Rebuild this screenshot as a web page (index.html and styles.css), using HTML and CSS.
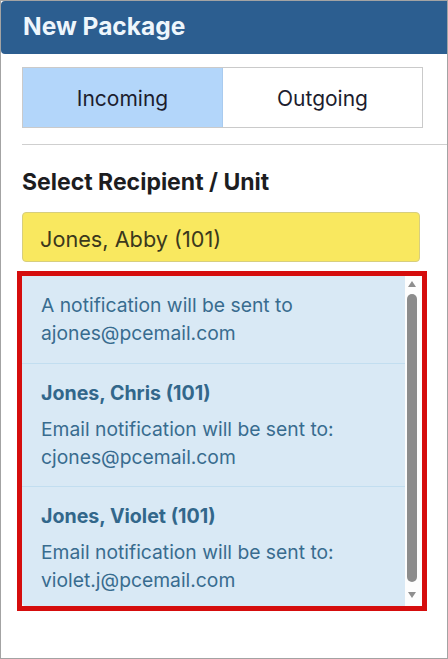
FILE: index.html
```html
<!DOCTYPE html>
<html lang="en">
<head>
<meta charset="utf-8">
<title>New Package</title>
<link rel="stylesheet" href="styles.css">
</head>
<body>
<div class="frame">
  <header class="header">New Package</header>
  <div class="content">
    <div class="toggle">
      <button class="seg seg-active" type="button">Incoming</button>
      <button class="seg" type="button">Outgoing</button>
    </div>
    <hr class="rule">
    <h2 class="heading">Select Recipient / Unit</h2>
    <div class="field">Jones, Abby (101)</div>
    <div class="listbox">
      <div class="options">
        <div class="option option-cut">
          <div class="email">A notification will be sent to<br>ajones@pcemail.com</div>
        </div>
        <div class="option">
          <div class="name">Jones, Chris (101)</div>
          <div class="email">Email notification will be sent to:<br>cjones@pcemail.com</div>
        </div>
        <div class="option">
          <div class="name">Jones, Violet (101)</div>
          <div class="email">Email notification will be sent to:<br>violet.j@pcemail.com</div>
        </div>
      </div>
      <div class="scrollbar">
        <span class="arrow arrow-up"></span>
        <span class="thumb"></span>
        <span class="arrow arrow-down"></span>
      </div>
    </div>
  </div>
</div>
</body>
</html>
```
FILE: styles.css
```css
* { box-sizing: border-box; }
html, body { margin: 0; padding: 0; background: #fff; }
body { font-family: Inter, "Noto Sans", sans-serif; }

.frame {
  width: 448px;
  height: 659px;
  border: 1px solid #a3a3a3;
  overflow: hidden;
  background: #fff;
}

.header {
  height: 53px;
  background: #2c5e90;
  color: #eef6fc;
  font-size: 24.5px;
  font-weight: 700;
  line-height: 50px;
  padding-left: 22px;
  border-radius: 4px 0 0 4px;
}

.content {
  padding: 13px 0 0 21px;
}

.toggle {
  display: flex;
  width: 401px;
  height: 61px;
  border: 1px solid #cacaca;
}
.seg {
  flex: 1;
  border: 0;
  margin: 0;
  padding: 2px 0 0;
  background: #fff;
  font-family: inherit;
  font-size: 21px;
  font-weight: 400;
  color: #1c1d2e;
}
.seg-active {
  background: #b3d6fa;
  border-right: 1px solid #a9cbef;
}

.rule {
  margin: 16px 0 0;
  border: 0;
  border-top: 1px solid #cfcfcf;
  height: 0;
}

.heading {
  margin: 23px 0 0;
  font-size: 23px;
  font-weight: 700;
  line-height: 28px;
  color: #1d1d1f;
}

.field {
  margin-top: 16px;
  width: 398px;
  height: 50px;
  padding: 4px 17px 0;
  background: #f9e85f;
  border: 1px solid #d7ce7e;
  border-radius: 4px;
  font-size: 21.7px;
  line-height: 44px;
  color: #3b381c;
}

.listbox {
  margin-top: 14px;
  width: 400px;
  height: 330px;
  display: flex;
  outline: 5px solid #d50d0d;
  background: #fdfdfd;
  overflow: hidden;
}

.options {
  flex: 1;
  background: #d9e9f5;
  overflow: hidden;
  color: #386c8f;
  border-radius: 0 0 0 4px;
}

.option {
  padding: 15px 12px 15px 19px;
  border-top: 1px solid #c2def0;
}
.option-cut {
  border-top: 0;
  padding-bottom: 16px;
}

.name {
  font-size: 19.6px;
  font-weight: 700;
  line-height: 28px;
  margin-bottom: 8px;
  color: #32678b;
}

.email {
  font-size: 19.3px;
  line-height: 28px;
}

.scrollbar {
  width: 17px;
  background: #fdfdfd;
  display: flex;
  flex-direction: column;
  align-items: flex-start;
  padding: 5px 0 8px 2px;
}
.arrow {
  width: 0;
  height: 0;
  margin-left: 1px;
  border-left: 4px solid transparent;
  border-right: 4px solid transparent;
}
.arrow-up { border-bottom: 6px solid #8e8e8e; }
.arrow-down { border-top: 6px solid #8e8e8e; }
.thumb {
  flex: 1;
  width: 10px;
  margin: 7px 0 10px;
  border-radius: 5px;
  background: #8c8c8c;
}
```
